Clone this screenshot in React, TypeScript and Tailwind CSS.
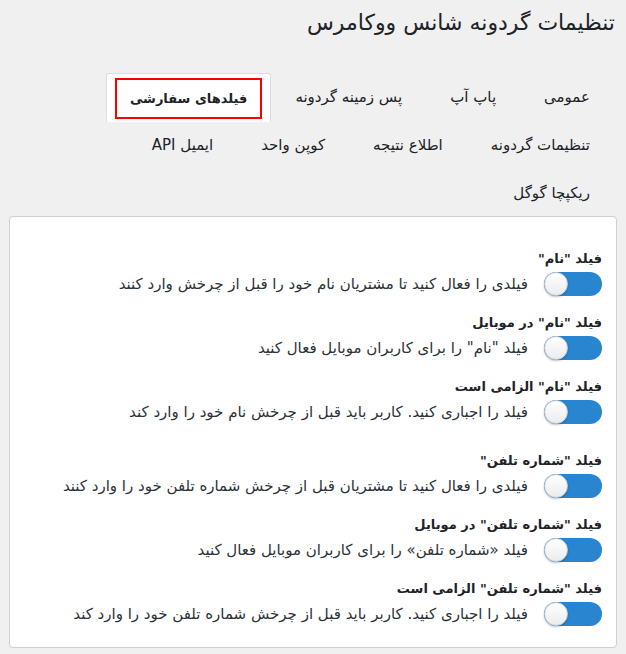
import React from "react";

const tabRows = [
  [
    { label: "عمومی" },
    { label: "پاپ آپ" },
    { label: "پس زمینه گردونه" },
    { label: "فیلدهای سفارشی", active: true },
  ],
  [
    { label: "تنظیمات گردونه" },
    { label: "اطلاع نتیجه" },
    { label: "کوپن واحد" },
    { label: "ایمیل API" },
  ],
  [{ label: "ریکپچا گوگل" }],
];

const fields = [
  {
    title: 'فیلد "نام"',
    desc: "فیلدی را فعال کنید تا مشتریان نام خود را قبل از چرخش وارد کنند",
  },
  {
    title: 'فیلد "نام" در موبایل',
    desc: 'فیلد "نام" را برای کاربران موبایل فعال کنید',
  },
  {
    title: 'فیلد "نام" الزامی است',
    desc: "فیلد را اجباری کنید. کاربر باید قبل از چرخش نام خود را وارد کند",
  },
  {
    title: 'فیلد "شماره تلفن"',
    desc: "فیلدی را فعال کنید تا مشتریان قبل از چرخش شماره تلفن خود را وارد کنند",
    group: true,
  },
  {
    title: 'فیلد "شماره تلفن" در موبایل',
    desc: "فیلد «شماره تلفن» را برای کاربران موبایل فعال کنید",
  },
  {
    title: 'فیلد "شماره تلفن" الزامی است',
    desc: "فیلد را اجباری کنید. کاربر باید قبل از چرخش شماره تلفن خود را وارد کند",
  },
];

function Toggle() {
  return (
    <span className="relative flex h-[24px] w-[58px] shrink-0 items-center rounded-full bg-[#2a85d0]">
      {/* knob sits on the left when checked (rtl) */}
      <span className="absolute left-0 top-0 h-[24px] w-[24px] rounded-full border border-[#c9c9c9] bg-gradient-to-b from-white to-[#ececec] shadow-[0_1px_2px_rgba(0,0,0,0.25)]" />
    </span>
  );
}

export default function App() {
  return (
    <div
      dir="rtl"
      className="min-h-screen bg-[#f0f0f1] px-[9px] pt-[8px] text-[#1d2327]"
      style={{ fontFamily: "Tahoma, 'DejaVu Sans', sans-serif" }}
    >
      <h1 className="pr-[2px] text-[22px] leading-[30px] font-normal">تنظیمات گردونه شانس ووکامرس</h1>

      {/* Tabs */}
      <nav className="mt-[35px] flex flex-col pr-[3px]">
        {tabRows.map((row, i) => (
          <div key={i} className="flex h-[48px] items-start">
            {row.map((tab) =>
              tab.active ? (
                <div
                  key={tab.label}
                  className="h-[49px] rounded-t-[3px] border border-b-0 border-[#dcdcde] bg-white px-[8px] pt-[4px]"
                >
                  <span className="flex h-[41px] items-center border-2 border-[#ff0000] px-[13px] text-[13px] font-bold">
                    {tab.label}
                  </span>
                </div>
              ) : (
                <a
                  key={tab.label}
                  className="flex h-[48px] items-center px-[24px] text-[15px] text-[#1d2327]"
                >
                  {tab.label}
                </a>
              )
            )}
          </div>
        ))}
      </nav>

      {/* Panel */}
      <div className="-mt-px rounded-[4px] border border-[#d0d0d0] bg-white px-[14px] pt-[32px] pb-[21px]">
        <div className="flex flex-col gap-[17px]">
          {fields.map((f) => (
            <div key={f.title} className={f.group ? "mt-[10px]" : ""}>
              <div className="text-[13px] font-bold leading-[20px] text-[#1d2327]">{f.title}</div>
              <label className="mt-[3px] flex h-[24px] items-center gap-[16px]">
                <Toggle />
                <span className="text-[15px] text-[#2c3338]">{f.desc}</span>
              </label>
            </div>
          ))}
        </div>
      </div>
    </div>
  );
}
